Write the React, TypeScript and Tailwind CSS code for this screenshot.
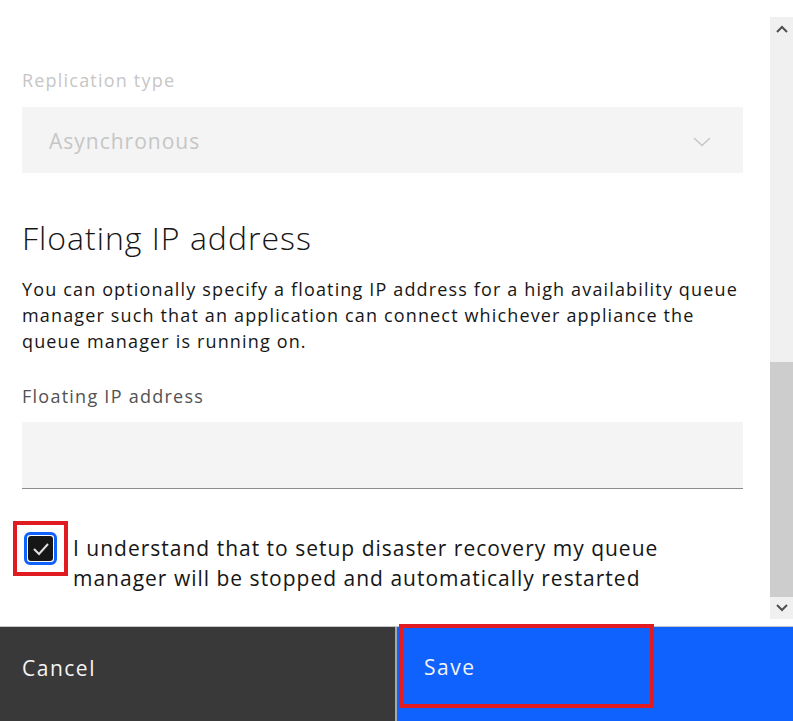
import React from "react";

export default function App() {
  const font = { fontFamily: "'Open Sans', 'Liberation Sans', sans-serif" };
  return (
    <div className="flex h-[721px] w-[793px] flex-col overflow-hidden bg-white" style={font}>
      <div className="flex h-[626px] flex-row">
        <div className="flex flex-1 flex-col pl-[22px] pr-[27px]">
          <div className="mt-[68px] text-[18px] leading-[24px] tracking-[1.2px] text-[#c6c6c6]">Replication type</div>
          <div className="mt-[15px] flex h-[66px] items-center justify-between bg-[#f4f4f4] pl-[27px] pr-[32px] pt-[3px]">
            <span className="text-[21px] tracking-[1px] text-[#c6c6c6]">Asynchronous</span>
            <svg width="18" height="10" viewBox="0 0 18 10" fill="none">
              <path d="M1 1 L9 8.5 L17 1" stroke="#c6c6c6" strokeWidth="1.5" />
            </svg>
          </div>
          <h2 className="mt-[45px] text-[32px] font-light leading-[40px] tracking-[1px] text-[#161616]">Floating IP address</h2>
          <p className="mt-[18px] text-[18px] leading-[26px] tracking-[1.15px] text-[#161616]">
            You can optionally specify a floating IP address for a high availability queue
            <br />
            manager such that an application can connect whichever appliance the
            <br />
            queue manager is running on.
          </p>
          <div className="mt-[30px] text-[18px] leading-[24px] tracking-[1.25px] text-[#525252]">Floating IP address</div>
          <div className="mt-[14px] h-[67px] border-b border-[#8d8d8d] bg-[#f4f4f4]" />
          <div className="mt-[32px] ml-[-9px] flex flex-row items-start gap-[5px]">
            <div className="flex h-[55px] w-[55px] shrink-0 items-center justify-center border-4 border-[#e11b22]">
              <div className="flex h-[33px] w-[33px] items-center justify-center rounded-[6px] border-[3px] border-[#0f62fe] bg-white">
                <div className="flex h-[25px] w-[25px] items-center justify-center rounded-[3px] bg-[#161616]">
                  <svg width="18" height="14" viewBox="0 0 18 14" fill="none">
                    <path d="M2 7 L7 12 L16 2" stroke="#e0e0e0" strokeWidth="2" />
                  </svg>
                </div>
              </div>
            </div>
            <div className="pt-[12px] text-[21px] leading-[30px] tracking-[1px] text-[#161616]">
              I understand that to setup disaster recovery my queue
              <br />
              manager will be stopped and automatically restarted
            </div>
          </div>
        </div>
        <div className="flex w-[23px] flex-col pt-[17px] pb-[7px]">
          <div className="flex h-[24px] items-center justify-center bg-[#f0f0f0]">
            <svg width="12" height="8" viewBox="0 0 12 8" fill="none">
              <path d="M1 7 L6 2 L11 7" stroke="#505050" strokeWidth="2" />
            </svg>
          </div>
          <div className="flex flex-1 flex-col bg-[#f0f0f0]">
            <div className="h-[321px]" />
            <div className="flex-1 bg-[#cdcdcd]" />
          </div>
          <div className="flex h-[22px] items-center justify-center bg-[#f0f0f0]">
            <svg width="12" height="8" viewBox="0 0 12 8" fill="none">
              <path d="M1 1 L6 6 L11 1" stroke="#505050" strokeWidth="2" />
            </svg>
          </div>
        </div>
      </div>
      <div className="flex h-[95px] flex-row border-t border-[#c6c6c6]">
        <div className="flex w-[395px] items-center bg-[#393939] pb-[10px] pl-[22px] text-[21px] tracking-[1.5px] text-[#f4f4f4]">Cancel</div>
        <div className="w-[2px] bg-[#a8a8a8]" />
        <div className="flex flex-1 flex-row bg-[#0f62fe]">
          <div className="mt-[-3px] mb-[13px] ml-[2px] flex w-[255px] items-center border-4 border-[#e11b22] pt-[4px] pl-[21px] text-[21px] tracking-[1.5px] text-[#f4f4f4]">
            Save
          </div>
        </div>
      </div>
    </div>
  );
}
